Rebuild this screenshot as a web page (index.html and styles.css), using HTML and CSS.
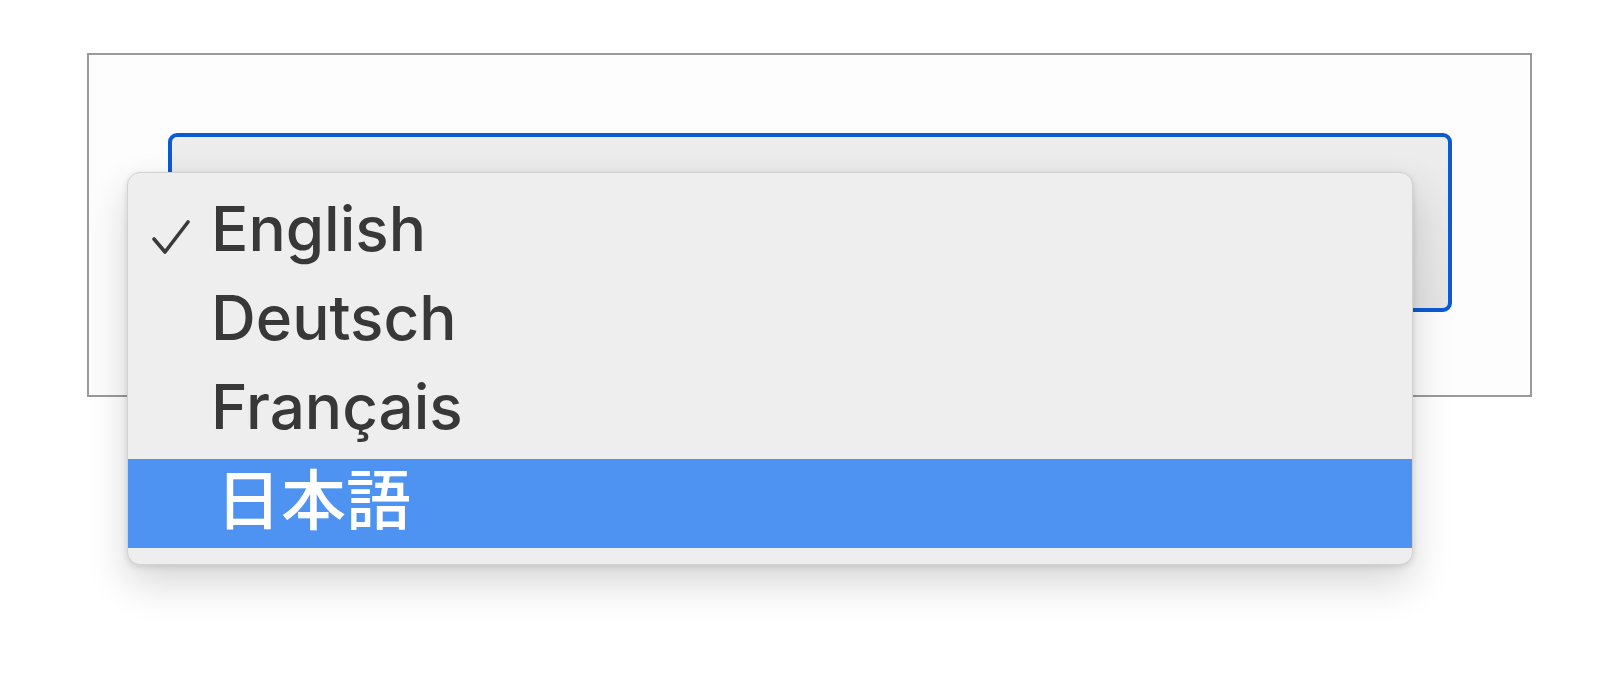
FILE: index.html
```html
<!DOCTYPE html>
<html lang="en">
<head>
<meta charset="utf-8">
<title>Language select</title>
<link rel="stylesheet" href="styles.css">
</head>
<body>
<div class="stage">
  <div class="frame">
    <div class="select"></div>
  </div>
  <ul class="menu">
    <li class="item">
      <span class="check"><svg width="38" height="36" viewBox="0 0 38 36"><path d="M2 20 L13 33 L36 3" fill="none" stroke="#3a3a3a" stroke-width="3.6" stroke-linecap="round" stroke-linejoin="round"/></svg></span>
      <span class="label">English</span>
    </li>
    <li class="item"><span class="check"></span><span class="label">Deutsch</span></li>
    <li class="item"><span class="check"></span><span class="label">Français</span></li>
    <li class="item active"><span class="check"></span><span class="label jp" lang="ja">日本語</span></li>
  </ul>
</div>
</body>
</html>
```
FILE: styles.css
```css
html, body {
  margin: 0;
  padding: 0;
  background: #ffffff;
}
html {
  height: 685px;
}
body {
  font-family: Inter, "Noto Sans", "Noto Sans CJK JP", sans-serif;
  padding: 53px 0 0 87px;
  box-sizing: border-box;
  height: 685px;
}
.stage {
  position: relative;
  width: 1445px;
  height: 600px;
}
.frame {
  width: 1445px;
  height: 344px;
  box-sizing: border-box;
  border: 2px solid #9a9a9a;
  background: #fdfdfd;
  padding: 78px 78px 0 79px;
}
.select {
  height: 179px;
  box-sizing: border-box;
  border: 4px solid #0b5bd3;
  border-radius: 9px;
  background: linear-gradient(#ededed, #e4e4e4);
}
.menu {
  position: absolute;
  left: 40px;
  top: 119px;
  width: 1286px;
  box-sizing: border-box;
  margin: 0;
  padding: 19px 0 16px;
  list-style: none;
  background: #eeeeef;
  border: 1px solid #d2d2d2;
  border-radius: 13px;
  box-shadow: 0 18px 40px rgba(0, 0, 0, 0.16), 0 2px 6px rgba(0, 0, 0, 0.12);
}
.item {
  height: 89px;
  display: flex;
  align-items: center;
  color: #383838;
  font-size: 62px;
  font-weight: 500;
}
.check {
  width: 83px;
  flex: none;
  display: flex;
  justify-content: flex-start;
  padding-left: 24px;
  box-sizing: border-box;
}
.check svg {
  display: block;
}
.label {
  line-height: 1;
  position: relative;
  top: -8px;
}
.item.active {
  background: #4e93f1;
  color: #ffffff;
}
.jp {
  font-family: "Noto Sans CJK JP", sans-serif;
  font-size: 65px;
  font-weight: 500;
  padding-left: 5px;
  top: -7px;
}
```
